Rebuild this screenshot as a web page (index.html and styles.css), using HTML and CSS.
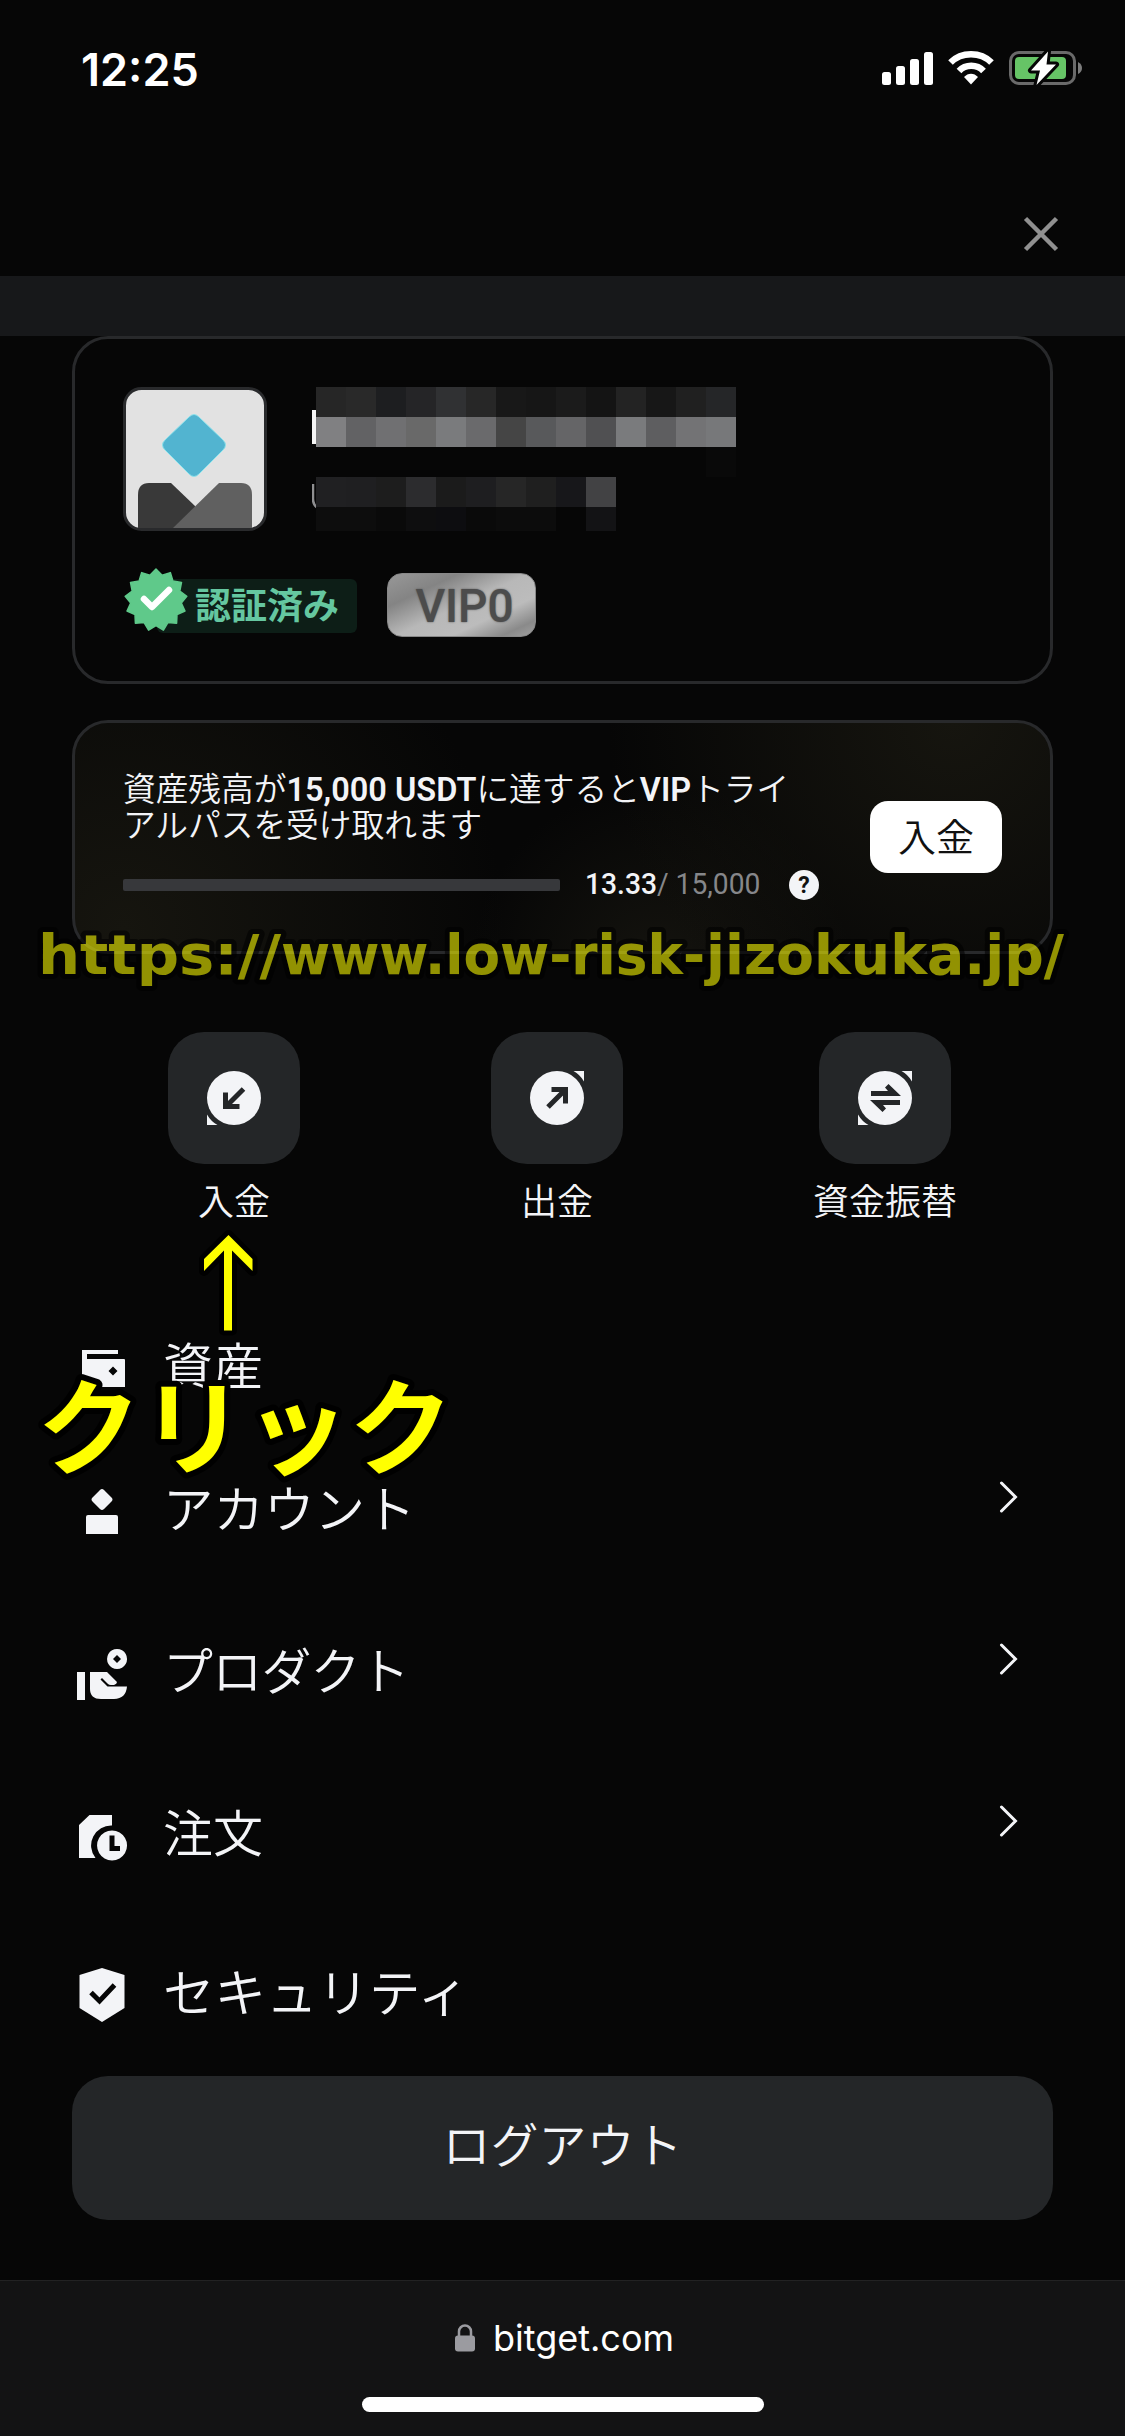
FILE: index.html
```html
<!DOCTYPE html>
<html lang="ja">
<head>
<meta charset="utf-8">
<title>bitget.com</title>
<link rel="stylesheet" href="styles.css">
</head>
<body>
<div class="screen">
  <header class="status">
    <span class="time">12:25</span>
    <svg class="indicators" width="202" height="36" viewBox="0 0 202 36">
      <g fill="#fff">
        <rect x="0" y="22" width="9" height="13" rx="2.500"/>
        <rect x="14" y="16" width="9" height="19" rx="2.500"/>
        <rect x="28" y="9" width="9" height="26" rx="2.500"/>
        <rect x="42" y="2" width="9" height="33" rx="2.500"/>
        <path d="M82 27c4-4.500 10-4.500 14 0L89 34.500z"/>
      </g>
      <g fill="none" stroke="#fff" stroke-width="6.500">
        <path d="M68.500 12.500c11-11 30-11 41 0"/>
        <path d="M77 21c6.500-7 18-7 24.500 0"/>
      </g>
      <rect x="128.500" y="2.500" width="64" height="31" rx="8.500" fill="none" stroke="#6a6a6a" stroke-width="3"/>
      <path d="M196 12q4 2 4 6t-4 6z" fill="#7c7c7c"/>
      <rect x="133" y="7" width="51" height="22" rx="4" fill="#66c466"/>
      <path d="M166 1.500L149 20.500h9L154.500 35L174 14.500h-9.500z" fill="#fff" stroke="#060606" stroke-width="6" stroke-linejoin="round" paint-order="stroke"/>
    </svg>
  </header>
  <div class="topbar">
    <svg width="36" height="36" viewBox="0 0 36 36"><path d="M2.500 2.500l31 31M33.500 2.500l-31 31" stroke="#909090" stroke-width="4.500"/></svg>
  </div>
  <div class="band"></div>

  <main class="content">
    <section class="card profile">
      <div class="identity">
        <svg class="avatar" width="144" height="144" viewBox="0 0 144 144">
          <rect x="1.500" y="1.500" width="141" height="141" rx="17" fill="#e2e2e2" stroke="#292a2c" stroke-width="3"/>
          <path d="M66 30q5-5 10 0l24 23q5 5 0 10L76 87q-5 5-10 0L42 63q-5-5 0-10z" fill="#52b4d0" stroke="#8ee3ec" stroke-width="1"/>
          <path d="M15 141v-33q0-12 11-12h22l24 23v22z" fill="#393939"/>
          <path d="M50 141l46-45h22q11 0 11 12v33z" fill="#606060"/>
        </svg>
        <svg class="masked" width="428" height="144" viewBox="0 0 428 144" shape-rendering="crispEdges">
          <path d="M0 23h5v34H0z" fill="#f5f5f5"/><path d="M1 97v15q0 6 5 9" fill="none" stroke="#8f8f91" stroke-width="2.500" shape-rendering="auto"/>
          <g id="mosaic" transform="translate(4 0)"></g>
        </svg>
      </div>
      <div class="badges">
        <div class="verified">
          <svg class="seal" width="64" height="64" viewBox="0 0 64 64"><g id="seal-shape"></g><path d="M20 31l8 8 17-17" fill="none" stroke="#fff" stroke-width="6.500" stroke-linecap="round" stroke-linejoin="round"/></svg>
          <span class="verified-label">認証済み</span>
        </div>
        <div class="vip">VIP0</div>
      </div>
    </section>

    <section class="card trial">
      <div class="trial-info">
        <p class="trial-text">資産残高が<b>15,000 USDT</b>に達すると<b>VIP</b>トライ<br>アルパスを受け取れます</p>
        <div class="progress">
          <span class="bar"></span>
          <span class="amount"><span>13.33<i>/ 15,000</i></span></span>
          <span class="help">?</span>
        </div>
      </div>
      <button class="deposit">入金</button>
    </section>

    <nav class="actions">
      <div class="action">
        <span class="tile"><svg width="54" height="54" viewBox="0 0 54 54"><circle cx="27" cy="27" r="27" fill="#f3f4f7"/><path d="M0 43.500V54h10.500Q4 50.500 0 43.500z" fill="#f3f4f7"/><path d="M36.500 18L20 34.500M18.500 21.500v14h14" fill="none" stroke="#242628" stroke-width="5"/></svg></span>
        <span>入金</span>
      </div>
      <div class="action">
        <span class="tile"><svg width="54" height="54" viewBox="0 0 54 54"><circle cx="27" cy="27" r="27" fill="#f3f4f7"/><path d="M54 10.500V0H43.500Q50 3.500 54 10.500z" fill="#f3f4f7"/><path d="M18 36L34 20M21.500 18.500h14v14" fill="none" stroke="#242628" stroke-width="5"/></svg></span>
        <span>出金</span>
      </div>
      <div class="action">
        <span class="tile"><svg width="54" height="54" viewBox="0 0 54 54"><circle cx="27" cy="27" r="27" fill="#f3f4f7"/><path d="M54 10.500V0H43.500Q50 3.500 54 10.500zM0 43.500V54h10.500Q4 50.500 0 43.500z" fill="#f3f4f7"/><path d="M13 25v-5h17l-3-3.500 3.500-3.500L43 25zM42 29v5H25l3 3.500-3.500 3.500L12 29z" fill="#242628"/></svg></span>
        <span>資金振替</span>
      </div>
    </nav>

    <ul class="menu">
      <li class="assets">
        <svg width="54" height="54" viewBox="0 0 54 54"><path fill="#f3f4f7" fill-rule="evenodd" d="M6 8h36v4H11v5h37q1 0 1 1v27H6zM37 24.500l-4.500 4.500 4.500 4.500 4.500-4.500z"/></svg>
        <span>資産</span>
      </li>
      <li class="account">
        <svg width="54" height="54" viewBox="0 0 54 54"><path fill="#f3f4f7" d="M24 5q2-2 4 0l7.500 7.500q2 2 0 4L28 24q-2 2-4 0l-7.500-7.500q-2-2 0-4zM12 30h28q2 0 2 2v17H10V32q0-2 2-2z"/></svg>
        <span>アカウント</span>
        <svg class="chevron" width="20" height="32" viewBox="0 0 20 32"><path d="M2.500 2L16.500 16 2.500 30" fill="none" stroke="#f3f4f7" stroke-width="3" stroke-linecap="round"/></svg>
      </li>
      <li class="product">
        <svg width="54" height="54" viewBox="2 0 54 54"><path fill="#f3f4f7" fill-rule="evenodd" d="M3 25h8v28H3zM43 2a10 10 0 1 0 .1 0zM43 8l4 4-4 4-4-4zM16 25h17l10 10q0 2-3 3h-3q-2 0-3-1l-6-6-1.500 1.500 7 7H53q-1 12-13 12.500H27Q16 52 16 42z"/></svg>
        <span>プロダクト</span>
        <svg class="chevron" width="20" height="32" viewBox="0 0 20 32"><path d="M2.500 2L16.500 16 2.500 30" fill="none" stroke="#f3f4f7" stroke-width="3" stroke-linecap="round"/></svg>
      </li>
      <li class="orders">
        <svg width="54" height="54" viewBox="2 0 54 54"><path fill="#f3f4f7" fill-rule="evenodd" d="M5 16L15.500 6H38v10.500A20 20 0 0 0 21.500 49H5zM38 21.500a15 15 0 1 0 .1 0zM35.500 26.500h5V37H46v5H35.500z"/></svg>
        <span>注文</span>
        <svg class="chevron" width="20" height="32" viewBox="0 0 20 32"><path d="M2.500 2L16.500 16 2.500 30" fill="none" stroke="#f3f4f7" stroke-width="3" stroke-linecap="round"/></svg>
      </li>
      <li class="security">
        <svg width="54" height="54" viewBox="2 0 54 54"><path fill="#f3f4f7" d="M28 0l22.500 7v33L28 54 5.500 40V7z"/><path d="M17 24.500l8.500 8.500 15-16" fill="none" stroke="#060606" stroke-width="5"/></svg>
        <span>セキュリティ</span>
      </li>
    </ul>
    <button class="logout">ログアウト</button>
  </main>

  <footer class="browser">
    <div class="address">
      <svg width="20" height="28" viewBox="0 0 20 28"><path d="M4 12V7.500a6 6 0 0 1 12 0V12" fill="none" stroke="#9b9ba0" stroke-width="2.500"/><rect x="0" y="11.500" width="20" height="16" rx="3" fill="#9b9ba0"/></svg>
      <span>bitget.com</span>
    </div>
    <div class="home"></div>
  </footer>

  <svg class="notes" width="1125" height="2436" viewBox="0 0 1125 2436">
    <text class="note-url" y="974"><tspan x="38" textLength="243" lengthAdjust="spacingAndGlyphs">https://</tspan><tspan x="281" textLength="424" lengthAdjust="spacingAndGlyphs">www.low-risk-</tspan><tspan x="706" textLength="358" lengthAdjust="spacingAndGlyphs">jizokuka.jp/</tspan></text>
    <path class="note-arrow" d="M228.500 1235l24 24v12l-20.500-20.500v80h-8v-80L204 1271v-12z"/>
    <text class="note-click" x="37" y="1467">クリック</text>
  </svg>
</div>
<script src="draw.js"></script>
</body>
</html>
```
FILE: styles.css
```css
* { box-sizing: border-box; }
body { margin: 0; background: #060606; color: #f3f4f7; font-family: "Noto Sans CJK JP", sans-serif; font-weight: 350; }
button { border: 0; padding: 0; font: inherit; color: inherit; }
svg { display: block; flex: none; }
.screen { position: relative; width: 1125px; height: 2436px; overflow: hidden; display: flex; flex-direction: column; }
.status { height: 140px; padding: 50px 41px 0 81px; display: flex; justify-content: space-between; align-items: flex-start; }
.time { font: 600 45px/39px Inter, sans-serif; color: #fff; }
.topbar { height: 136px; padding: 76px 66px 0 0; display: flex; justify-content: flex-end; }
.band { height: 60px; background: #17181a; }
.content { padding: 0 72px; height: 1944px; display: flex; flex-direction: column; }
.content > * { flex: none; }
.card { border: 3px solid #28292b; border-radius: 36px; }
.profile { height: 348px; padding: 48px; display: flex; flex-direction: column; gap: 36px; }
.identity { display: flex; gap: 45px; }
.badges { display: flex; gap: 30px; align-items: flex-start; }
.verified { display: flex; width: 234px; }
.seal { margin: 1px -31px 0 1px; z-index: 1; }
.verified-label { margin-top: 12px; width: 200px; height: 54px; padding-left: 38px; border-radius: 6px; background: #0d1e17; color: #65c7a0; font-weight: 700; font-size: 36px; line-height: 48px; }
.vip { margin-top: 6px; width: 149px; height: 64px; padding-left: 6px; border-radius: 15px; border: 1px solid #888; background: linear-gradient(155deg, #989898, #848484 25%, #b8b8b8 50%, #bcbcbc 70%, #8a8a8a 88%, #a0a0a0); color: #4c4c4c; font: 500 46px/64px Roboto, sans-serif; text-align: center; text-shadow: 0 0 2px #555; }
.trial { height: 234px; margin-top: 36px; padding: 48px; display: flex; justify-content: space-between; background: radial-gradient(circle at 90% 0, #16150f, transparent 38%), radial-gradient(circle at 60% 110%, #15140f, transparent 30%), radial-gradient(circle at 5% 90%, #16150f, transparent 40%); }
.trial-text { margin: -2px 0 0; height: 74px; font-size: 32.700px; line-height: 36px; white-space: nowrap; }
.trial-text b { font-family: Roboto, sans-serif; font-weight: 600; font-size: 32.500px; line-height: 0; }
.progress { margin-top: 26px; display: flex; align-items: center; height: 32px; }
.bar { width: 437px; height: 12px; border-radius: 2px; background: #37383b; }
.amount { margin-left: 25px; width: 177px; margin-top: -3px; font: 500 30px/32px Roboto, sans-serif; white-space: nowrap; }
.amount span { display: inline-block; transform: scaleX(.94); transform-origin: left; }
.amount i { font-style: normal; font-weight: 400; color: #86878a; }
.help { margin-left: 27px; width: 30px; height: 30px; border-radius: 15px; background: #f3f4f7; color: #111; font: 700 23px/31px Roboto, sans-serif; text-align: center; }
.deposit { margin-top: 30px; padding-bottom: 5px; width: 132px; height: 72px; border-radius: 18px; background: #fff; color: #111; font-size: 38px; line-height: 60px; }
.actions { margin-top: 78px; height: 192px; display: grid; grid-template-columns: 324px 322px 334px; }
.action { display: flex; flex-direction: column; align-items: center; font-size: 36px; line-height: 40px; gap: 15px; }
.tile { width: 132px; height: 132px; border-radius: 36px; background: #242628; display: grid; place-items: center; }
.menu { list-style: none; margin: 118px 0 0; padding: 0; height: 734px; display: flex; flex-direction: column; }
.menu li { flex: none; height: 162px; display: flex; align-items: flex-start; gap: 33px; padding-left: 4px; font-size: 50px; line-height: 43px; white-space: nowrap; }
.menu .assets { height: 143px; }
.menu .orders { height: 159px; }
.account span { font-size: 50.500px; }
.product span { letter-spacing: -.8px; }
.security span { font-size: 51.500px; }
.chevron { margin: -4px 34px 0 auto; }
.logout { width: 981px; height: 144px; padding-bottom: 13px; border-radius: 36px; background: #242628; font-size: 48px; line-height: 122px; }
.browser { height: 156px; border-top: 1px solid #222223; background: #131314; display: flex; flex-direction: column; align-items: center; }
.address { margin-top: 32px; padding-left: 4px; height: 50px; display: flex; align-items: center; gap: 18px; font: 400 36px/50px Inter, sans-serif; color: #fff; }
.home { margin-top: 34px; width: 402px; height: 15px; border-radius: 8px; background: #fff; }
/* yellow notes lying over the page */
.notes { position: absolute; inset: 0; paint-order: stroke; stroke: #000; stroke-linejoin: round; }
.note-url { font: 700 55px "DejaVu Sans", sans-serif; fill: #ff0; stroke-width: 10px; opacity: .56; }
.note-arrow { fill: #ff0; stroke-width: 10px; }
.note-click { font: 700 104px "Noto Sans CJK JP", sans-serif; fill: #ff0; stroke-width: 12px; }
```
FILE: draw.js
```javascript
const NS = "http://www.w3.org/2000/svg";
const mosaic = document.getElementById("mosaic");
// rows of 30px mosaic cells: [top, height, colours]
const rows = [
  [0, 30, "262626 292929 1d1e20 252527 303133 272727 181818 161616 1b1b1b 141414 232323 171717 202020 252628"],
  [30, 30, "808082 626264 707072 696969 7a7b7d 6a6a6c 454545 58595b 656567 505052 7a7b7d 5e5e60 737375 77787a"],
  [60, 30, "060606 060606 060606 060606 060606 060606 060606 060606 060606 060606 060606 060606 060606 090909"],
  [90, 30, "202022 1f1f21 1d1d1d 2c2c2e 1b1b1b 1e1e20 262626 1f1f1f 17171a 424244"],
  [120, 24, "0d0d0d 0d0d0d 0a0a0a 0e0e0f 0d0d10 0a0a0a 0c0c0c 0c0c0c 060606 131315"]
];
rows.forEach(([y, h, colours]) => colours.split(" ").forEach((c, i) => {
  const r = document.createElementNS(NS, "rect");
  r.setAttribute("x", i * 30);
  r.setAttribute("y", y);
  r.setAttribute("width", 30);
  r.setAttribute("height", h);
  r.setAttribute("fill", "#" + c);
  mosaic.appendChild(r);
}));
// thirteen-pointed seal
const pts = [];
for (let i = 0; i < 26; i++) {
  const a = -Math.PI / 2 + i * Math.PI / 13, d = i % 2 ? 25.5 : 31;
  pts.push((32 + d * Math.cos(a)).toFixed(1) + "," + (32 + d * Math.sin(a)).toFixed(1));
}
const seal = document.createElementNS(NS, "polygon");
seal.setAttribute("points", pts.join(" "));
seal.setAttribute("fill", "#5fc98a");
seal.setAttribute("stroke", "#5fc98a");
seal.setAttribute("stroke-width", "1.5");
seal.setAttribute("stroke-linejoin", "round");
document.getElementById("seal-shape").appendChild(seal);
```
